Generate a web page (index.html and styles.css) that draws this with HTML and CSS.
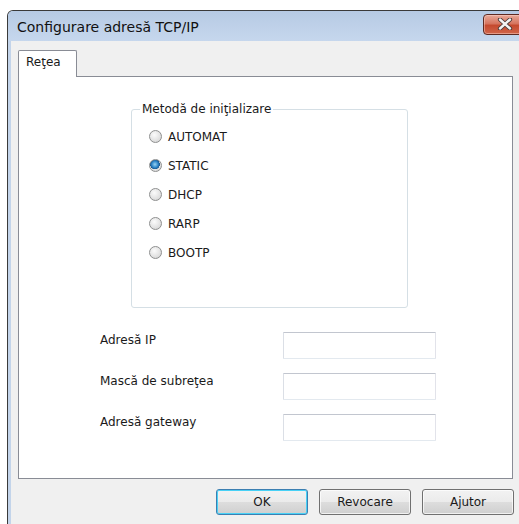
FILE: index.html
```html
<!DOCTYPE html>
<html lang="ro">
<head>
<meta charset="utf-8">
<title>Configurare adresă TCP/IP</title>
<link rel="stylesheet" href="styles.css">
</head>
<body>
<div class="window">
  <div class="titlebar">
    <span class="title">Configurare adresă TCP/IP</span>
    <button class="close" aria-label="Închide">
      <svg width="18" height="12" viewBox="0 0 18 12">
        <path d="M4 1.5 L14 10.5 M14 1.5 L4 10.5" stroke="#4a3a38" stroke-width="4.2" stroke-linecap="round"/>
        <path d="M4 1.5 L14 10.5 M14 1.5 L4 10.5" stroke="#f4f4f4" stroke-width="2.4" stroke-linecap="round"/>
      </svg>
    </button>
  </div>
  <div class="client">
    <div class="tabs">
      <div class="tab active">Reţea</div>
    </div>
    <div class="panel">
      <fieldset class="group">
        <legend>Metodă de iniţializare</legend>
        <label class="radio"><span class="dot"></span>AUTOMAT</label>
        <label class="radio"><span class="dot checked"></span>STATIC</label>
        <label class="radio"><span class="dot"></span>DHCP</label>
        <label class="radio"><span class="dot"></span>RARP</label>
        <label class="radio"><span class="dot"></span>BOOTP</label>
      </fieldset>
      <div class="fields">
        <span class="flabel">Adresă IP</span><span class="input"></span>
        <span class="flabel">Mască de subreţea</span><span class="input"></span>
        <span class="flabel">Adresă gateway</span><span class="input"></span>
      </div>
    </div>
    <div class="buttons">
      <button class="btn default">OK</button>
      <button class="btn">Revocare</button>
      <button class="btn">Ajutor</button>
    </div>
  </div>
</div>
</body>
</html>
```
FILE: styles.css
```css
html, body {
  margin: 0;
  padding: 0;
  background: #ffffff;
  overflow: hidden;
  height: 100%;
}

body {
  font-family: "DejaVu Sans", Verdana, sans-serif;
  font-size: 12px;
  color: #1a1a1a;
}

/* dialog frame: dark outline, light blue frame strip */
.window {
  margin: 10px 0 0 7px;
  width: 524px;
  height: 513px;
  border: 1px solid #3a3a3a;
  border-bottom: none;
  border-radius: 6px 6px 0 0;
  background: #c3d4ea;
  display: flex;
  flex-direction: column;
}

.titlebar {
  height: 30px;
  flex: none;
  display: flex;
  align-items: center;
  padding-left: 9px;
  border-radius: 5px 5px 0 0;
  background: linear-gradient(#b6cae4, #c6d7ed);
}

.title {
  font-family: "DejaVu Sans", sans-serif;
  font-size: 14px;
  color: #111;
  padding-top: 1px;
}

.close {
  flex: none;
  margin-left: auto;
  margin-right: 6px;
  margin-top: -4px;
  width: 43px;
  height: 21px;
  padding: 0 0 0 1px;
  border: 1px solid #5e2a22;
  border-radius: 4px;
  background: linear-gradient(#e9a999 0%, #d6755f 45%, #c54a2f 55%, #d0654a 100%);
  box-shadow: inset 0 0 0 1px rgba(255, 220, 210, 0.45);
  display: flex;
  align-items: center;
  justify-content: center;
}

.client {
  flex: 1;
  margin-left: 3px;
  background: #f0f0f0;
  padding: 9px 0 0 7px;
  display: flex;
  flex-direction: column;
}

.tabs {
  display: flex;
  height: 26px;
  position: relative;
  z-index: 1;
}

.tab {
  border: 1px solid #898c95;
  border-bottom: none;
  background: #ffffff;
  padding: 4px 0 0 7px;
  box-sizing: border-box;
  width: 59px;
  height: 27px;
  border-radius: 2px 2px 0 0;
}

.panel {
  width: 493px;
  height: 401px;
  border: 1px solid #898c95;
  background: #ffffff;
}

.group {
  margin: 25px 0 0 112px;
  width: 277px;
  height: 206px;
  box-sizing: border-box;
  border: 1px solid #d5dfe5;
  border-radius: 3px;
  padding: 6px 0 0 17px;
}

.group legend {
  padding: 0 2px;
  margin-left: -9px;
  color: #1a1a1a;
}

.radio {
  display: flex;
  align-items: center;
  height: 29px;
  gap: 6px;
  line-height: 1;
}

/* radio bullet: grey sphere, blue core when selected */
.dot {
  width: 13px;
  height: 13px;
  border-radius: 50%;
  border: 1px solid #8e8f8f;
  box-sizing: border-box;
  background: radial-gradient(circle at 40% 35%, #fbfbfb 0%, #e8e8e8 45%, #cfcfcf 100%);
  flex: none;
}

.dot.checked {
  background:
    radial-gradient(circle at 45% 40%, #9ad4f4 0%, #2f86c9 35%, #1b5a93 52%, transparent 56%),
    radial-gradient(circle at 40% 35%, #fbfbfb 0%, #e8e8e8 45%, #cfcfcf 100%);
}

.fields {
  margin: 24px 0 0 81px;
  display: grid;
  grid-template-columns: 183px 153px;
  row-gap: 14px;
  align-items: start;
}

.flabel {
  line-height: 14px;
  padding-top: 1px;
}

.input {
  height: 27px;
  box-sizing: border-box;
  border: 1px solid;
  border-color: #c2c6cf #e2e3ea #e3e9ef #dbdfe6;
  background: #fff;
  border-radius: 1px;
}

.buttons {
  display: flex;
  justify-content: flex-end;
  gap: 11px;
  width: 496px;
  margin-top: 10px;
}

.btn {
  width: 92px;
  height: 26px;
  border: 1px solid #707070;
  border-radius: 3px;
  font-family: "DejaVu Sans", Verdana, sans-serif;
  font-size: 12px;
  color: #1a1a1a;
  background: linear-gradient(#f2f2f2 0%, #ebebeb 49%, #dddddd 51%, #cfcfcf 100%);
  box-shadow: inset 0 0 0 1px rgba(255, 255, 255, 0.7);
  padding: 0;
}

.btn.default {
  border-color: #3c7fb1;
  box-shadow: inset 0 0 0 1px #48d1f6;
}
```
